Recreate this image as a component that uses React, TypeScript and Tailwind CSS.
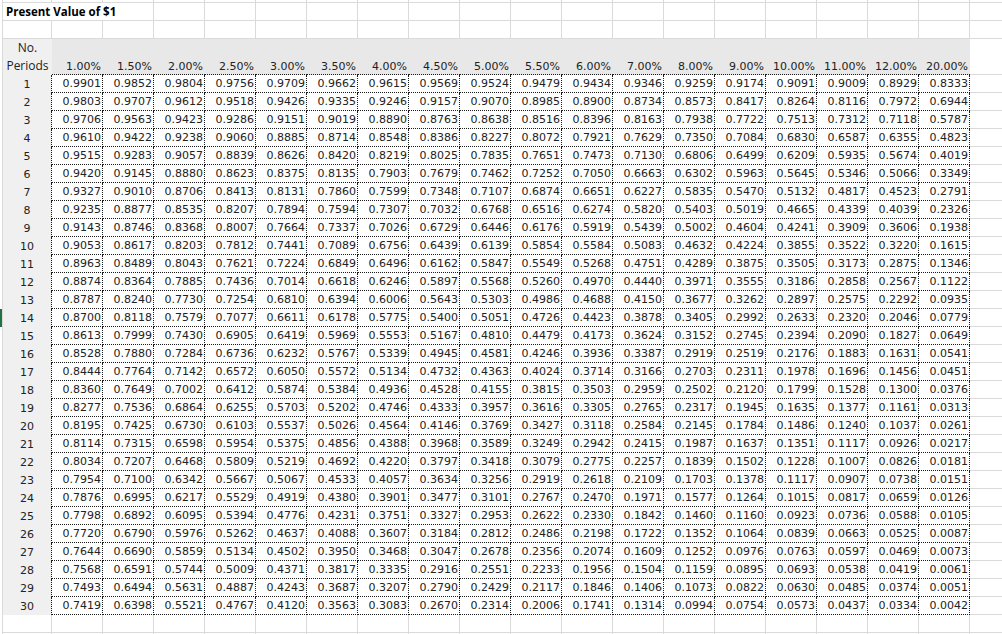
import React from 'react'

const rates = [1, 1.5, 2, 2.5, 3, 3.5, 4, 4.5, 5, 5.5, 6, 7, 8, 9, 10, 11, 12, 20]
const periods = Array.from({ length: 30 }, (_, i) => i + 1)

// present value of $1 received n periods out at rate r (%)
const pv = (r: number, n: number) => (1 / Math.pow(1 + r / 100, n)).toFixed(4)

const line = 'border-[#dadada]'
const dotted = 'border-dotted border-[#1a1a1a]'

const Sliver = ({ green = false }: { green?: boolean }) => (
  <div className={`w-[3px] shrink-0 border-r ${line} ${green ? 'bg-[#217346]' : ''}`} />
)

const BlankRow = ({ h = 'h-[18px]' }: { h?: string }) => (
  <div className={`flex ${h}`}>
    <Sliver />
    <div className={`w-[49px] shrink-0 border-r border-b ${line}`} />
    {rates.map((r) => (
      <div key={r} className={`w-[51px] shrink-0 border-r border-b ${line}`} />
    ))}
    <div className={`flex-1 border-b ${line}`} />
  </div>
)

const TitleRow = () => (
  <div className="flex h-[18px]">
    <Sliver />
    <div
      className={`w-[151px] shrink-0 border-b ${line} border-r flex items-center pl-[3px] font-['Open_Sans',sans-serif] font-bold text-[11.5px] text-black whitespace-nowrap`}
    >
      Present Value of $1
    </div>
    {rates.slice(2).map((r) => (
      <div key={r} className={`w-[51px] shrink-0 border-r border-b ${line}`} />
    ))}
    <div className={`flex-1 border-b ${line}`} />
  </div>
)

const HeaderRow = () => (
  <div className="flex h-[36px]">
    <Sliver />
    <div className="w-[49px] shrink-0 bg-[#f0f0f0] flex flex-col items-center justify-end font-['Open_Sans',sans-serif] text-[12px] leading-[18px] text-[#222]">
      <span>No.</span>
      <span>Periods</span>
    </div>
    {rates.map((r) => (
      <div
        key={r}
        className={`w-[51px] shrink-0 bg-[#e8e8e8] border-b ${dotted} flex items-end justify-end pr-[2px] pb-[2px] text-[11px] leading-none text-[#222]`}
      >
        {r.toFixed(2)}%
      </div>
    ))}
    <div className={`flex-1 border-b ${line}`} />
  </div>
)

const DataRow = ({ n }: { n: number }) => (
  <div className="flex h-[18px]">
    <Sliver green={n === 14} />
    <div
      className={`w-[49px] shrink-0 bg-[#f0f0f0] border-r ${dotted} flex items-center justify-center text-[11px] leading-none text-[#222]`}
    >
      {n}
    </div>
    {rates.map((r) => (
      <div
        key={r}
        className={`w-[51px] shrink-0 border-r border-b ${dotted} flex items-center justify-end pr-[1px] text-[11px] leading-none text-[#222]`}
      >
        {pv(r, n)}
      </div>
    ))}
    <div className={`flex-1 border-b ${line}`} />
  </div>
)

const App = () => {
  return (
    <div className="w-[1002px] h-[634px] overflow-hidden bg-white font-['DejaVu_Sans',sans-serif]">
      <BlankRow h="h-[3px]" />
      <TitleRow />
      <BlankRow />
      <HeaderRow />
      {periods.map((n) => (
        <DataRow key={n} n={n} />
      ))}
      <BlankRow />
      <BlankRow h="h-[18px]" />
    </div>
  )
}

export default App
